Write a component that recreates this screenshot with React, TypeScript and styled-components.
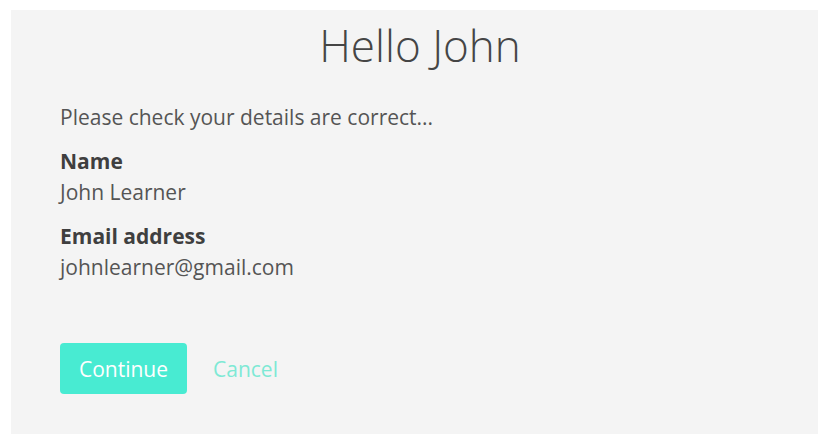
import React from "react";
import styled, { createGlobalStyle } from "styled-components";

const Global = createGlobalStyle`
  html, body { margin: 0; padding: 0; background: #ffffff; }
  body { font-family: "Open Sans", "Noto Sans", sans-serif; }
`;

const Page = styled.div`
  padding: 10px 2px 11px 11px;
`;

const Panel = styled.main`
  background: #f4f4f4;
  height: 424px;
  box-sizing: border-box;
  padding: 6px 49px 0 49px;
  display: flex;
  flex-direction: column;
`;

const Title = styled.h1`
  margin: 0;
  padding-left: 11px;
  text-align: center;
  font-weight: 300;
  font-size: 44px;
  line-height: 59px;
  color: #454545;
`;

const Intro = styled.p`
  margin: 27px 0 0;
  font-size: 21px;
  line-height: 30px;
  color: #555555;
`;

const Field = styled.div`
  margin-top: 13px;
  display: flex;
  flex-direction: column;
`;

const Label = styled.span`
  font-size: 21px;
  font-weight: 700;
  line-height: 32px;
  color: #3f3f3f;
`;

const Value = styled.span`
  font-size: 21px;
  line-height: 30px;
  color: #555555;
`;

const Actions = styled.div`
  margin-top: 61px;
  display: flex;
  align-items: center;
  gap: 26px;
`;

const PrimaryButton = styled.button`
  width: 127px;
  height: 51px;
  border: none;
  border-radius: 4px;
  background: #48ebd2;
  color: #ffffff;
  font-family: inherit;
  font-size: 21px;
  padding: 0;
  cursor: pointer;
`;

const LinkButton = styled.button`
  background: none;
  border: none;
  padding: 0;
  font-family: inherit;
  font-size: 21px;
  color: #7ee9d5;
  cursor: pointer;
`;

export default function App() {
  return (
    <>
      <Global />
      <Page>
        <Panel>
          <Title>Hello John</Title>
          <Intro>Please check your details are correct...</Intro>
          <Field>
            <Label>Name</Label>
            <Value>John Learner</Value>
          </Field>
          <Field>
            <Label>Email address</Label>
            <Value>johnlearner@gmail.com</Value>
          </Field>
          <Actions>
            <PrimaryButton>Continue</PrimaryButton>
            <LinkButton>Cancel</LinkButton>
          </Actions>
        </Panel>
      </Page>
    </>
  );
}
